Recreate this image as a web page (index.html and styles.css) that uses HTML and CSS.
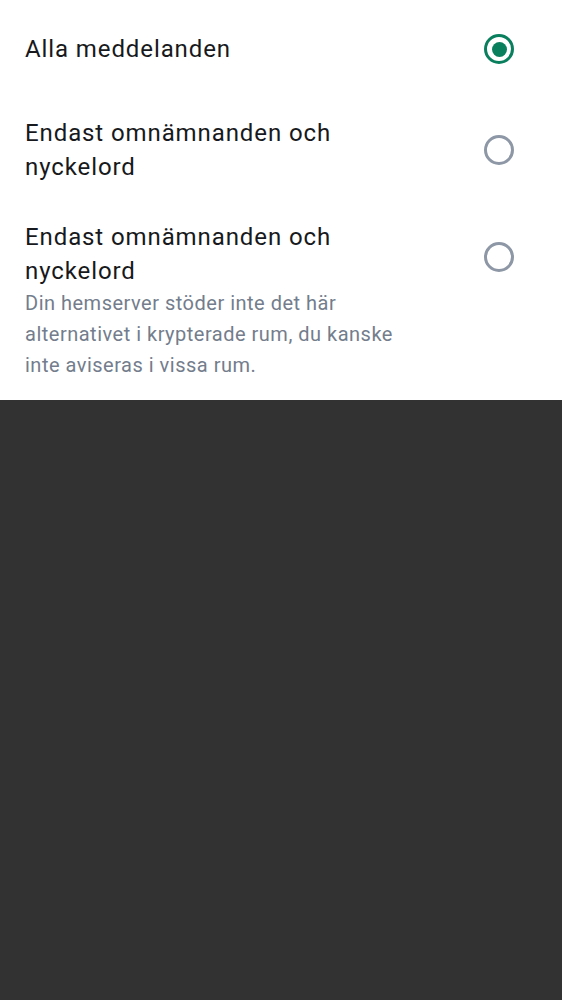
FILE: index.html
```html
<!DOCTYPE html>
<html lang="sv">
<head>
<meta charset="utf-8">
<link rel="stylesheet" href="styles.css">
</head>
<body>
<div class="sheet">
  <div class="row row-first">
    <div class="texts"><div class="title">Alla meddelanden</div></div>
    <div class="radio checked"></div>
  </div>
  <div class="row row-second">
    <div class="texts"><div class="title">Endast omnämnanden och nyckelord</div></div>
    <div class="radio"></div>
  </div>
  <div class="row row-top">
    <div class="texts">
      <div class="title">Endast omnämnanden och nyckelord</div>
      <div class="sub">Din hemserver stöder inte det här alternativet i krypterade rum, du kanske inte aviseras i vissa rum.</div>
    </div>
    <div class="radio-box"><div class="radio"></div></div>
  </div>
</div>
</body>
</html>
```
FILE: styles.css
```css
html, body {
  margin: 0;
  padding: 0;
  background: #323232;
  height: 100%;
}
body {
  font-family: Roboto, "Noto Sans", sans-serif;
}
.sheet {
  background: #ffffff;
  height: 400px;
  display: flex;
  flex-direction: column;
}
.row {
  display: flex;
  align-items: center;
  padding: 0 48px 0 25px;
}
.row-first {
  padding-top: 32px;
  padding-bottom: 32px;
}
.row-second {
  padding-top: 18px;
  padding-bottom: 18px;
}
.row-top {
  align-items: flex-start;
  padding-top: 18px;
}
.texts {
  flex: none;
  width: 392px;
}
.row .radio,
.row .radio-box {
  margin-left: auto;
}
.title {
  font-size: 24px;
  line-height: 34px;
  color: #17191c;
  letter-spacing: 0.9px;
}
.sub {
  font-size: 20px;
  line-height: 31px;
  color: #737d8c;
  letter-spacing: 0.5px;
}
.radio-box {
  height: 68px;
  margin-top: 3px;
  display: flex;
  align-items: center;
}
.radio {
  width: 30px;
  height: 30px;
  box-sizing: border-box;
  border: 3px solid #8d97a5;
  border-radius: 50%;
  flex: none;
  display: flex;
  align-items: center;
  justify-content: center;
}
.radio.checked {
  border-color: #0a7f5e;
}
.radio.checked::after {
  content: "";
  width: 15px;
  height: 15px;
  border-radius: 50%;
  background: #0a7f5e;
}
```
